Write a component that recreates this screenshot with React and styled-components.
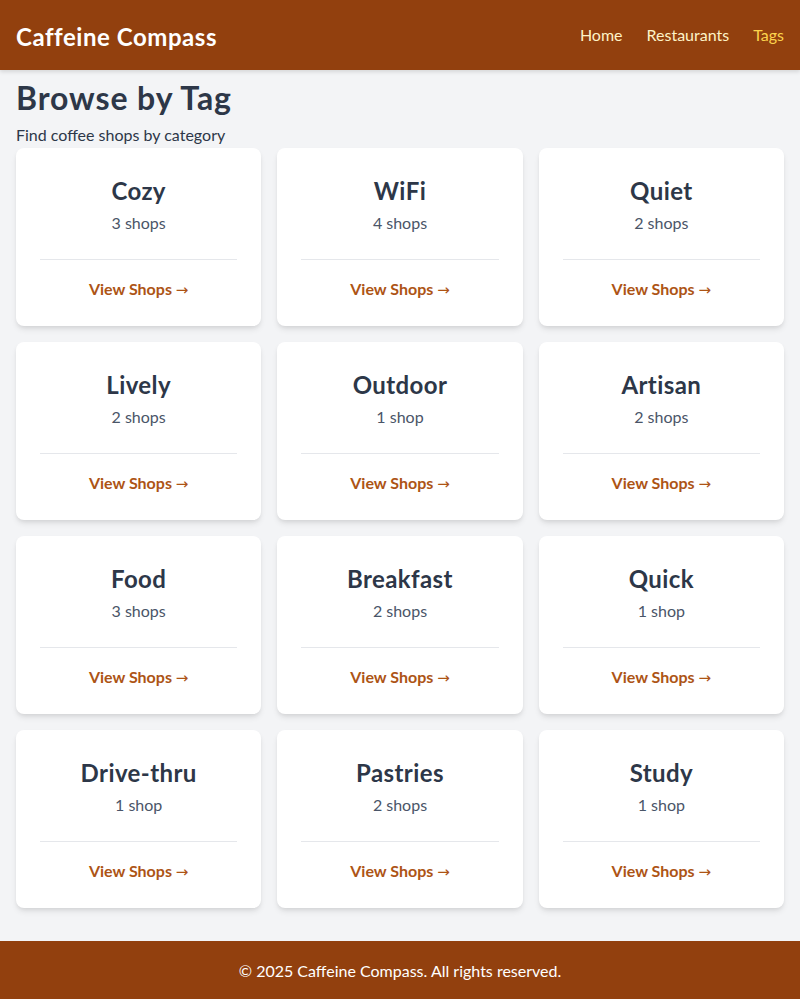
import React from "react";
import styled, { createGlobalStyle } from "styled-components";

const Global = createGlobalStyle`
  html, body { margin: 0; padding: 0; }
  body {
    background: #f3f4f6;
    font-family: Lato, "Open Sans", sans-serif;
    color: #2d3748;
  }
  * { box-sizing: border-box; }
`;

const Page = styled.div`
  min-height: 999px;
  display: flex;
  flex-direction: column;
`;

const Header = styled.header`
  height: 70px;
  background: #92400e;
  display: flex;
  align-items: center;
  justify-content: space-between;
  padding: 0 16px;
  box-shadow: 0 2px 4px rgba(0, 0, 0, 0.12);
`;

const Logo = styled.div`
  color: #ffffff;
  font-size: 24px;
  font-weight: 700;
  letter-spacing: 0.55px;
  margin-top: 3px;
`;

const Nav = styled.nav`
  display: flex;
  gap: 24px;
  margin-top: -1px;
`;

const NavLink = styled.a`
  font-size: 16px;
  color: ${(p) => (p.$active ? "#fcd34d" : "#fef3c7")};
  text-decoration: none;
`;

const Main = styled.main`
  flex: 1;
  padding: 10px 16px 32px;
`;

const Title = styled.h1`
  margin: 0 0 7px;
  font-size: 32px;
  line-height: 36px;
  font-weight: 700;
  letter-spacing: 0.9px;
  color: #2d3748;
`;

const Subtitle = styled.p`
  margin: 0 0 1px;
  font-size: 16px;
  line-height: 24px;
  color: #2d3748;
`;

const Grid = styled.div`
  display: grid;
  grid-template-columns: repeat(3, 1fr);
  gap: 16px;
`;

const Card = styled.div`
  background: #ffffff;
  border-radius: 8px;
  box-shadow: 0 4px 6px -1px rgba(0, 0, 0, 0.1), 0 2px 4px -1px rgba(0, 0, 0, 0.06);
  padding: 24px;
  text-align: center;
`;

const TagName = styled.h2`
  margin: 0;
  font-size: 24px;
  line-height: 36px;
  font-weight: 700;
  letter-spacing: 0.4px;
  color: #2d3748;
  position: relative;
  top: 1px;
`;

const Count = styled.div`
  margin-top: 3px;
  font-size: 16px;
  line-height: 24px;
  color: #4a5568;
`;

const Divider = styled.div`
  margin-top: 24px;
  border-top: 1px solid #e5e7eb;
  padding-top: 17px;
`;

const ViewLink = styled.a`
  font-size: 16px;
  line-height: 24px;
  font-weight: 700;
  color: #ad5415;
  text-decoration: none;
  display: inline-block;
`;

const Arrow = styled.span`
  font-family: "DejaVu Sans", sans-serif;
  font-weight: 400;
  font-size: 15px;
`;

const Footer = styled.footer`
  height: 58px;
  background: #92400e;
  color: #ffffff;
  display: flex;
  align-items: center;
  justify-content: center;
  font-size: 16px;
`;

const tags = [
  ["Cozy", 3],
  ["WiFi", 4],
  ["Quiet", 2],
  ["Lively", 2],
  ["Outdoor", 1],
  ["Artisan", 2],
  ["Food", 3],
  ["Breakfast", 2],
  ["Quick", 1],
  ["Drive-thru", 1],
  ["Pastries", 2],
  ["Study", 1],
];

export default function App() {
  return (
    <Page>
      <Global />
      <Header>
        <Logo>Caffeine Compass</Logo>
        <Nav>
          <NavLink href="#">Home</NavLink>
          <NavLink href="#">Restaurants</NavLink>
          <NavLink href="#" $active>Tags</NavLink>
        </Nav>
      </Header>
      <Main>
        <Title>Browse by Tag</Title>
        <Subtitle>Find coffee shops by category</Subtitle>
        <Grid>
          {tags.map(([name, n]) => (
            <Card key={name}>
              <TagName>{name}</TagName>
              <Count>
                {n} {n === 1 ? "shop" : "shops"}
              </Count>
              <Divider>
                <ViewLink href="#">
                  View Shops <Arrow>→</Arrow>
                </ViewLink>
              </Divider>
            </Card>
          ))}
        </Grid>
      </Main>
      <Footer>© 2025 Caffeine Compass. All rights reserved.</Footer>
    </Page>
  );
}
